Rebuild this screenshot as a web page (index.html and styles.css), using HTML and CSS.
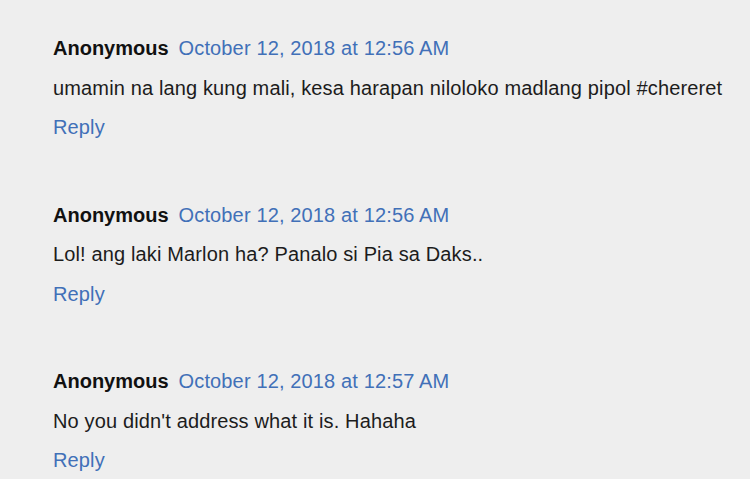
FILE: index.html
```html
<!DOCTYPE html>
<html lang="en">
<head>
    <meta charset="UTF-8">
    <title>Comments</title>
    <link rel="stylesheet" href="styles.css">
</head>
<body>
    <div class="comments">
        <!-- Comment 1 -->
        <div class="comment">
            <div class="comment-header">
                <span class="user">Anonymous</span>
                <a class="timestamp" href="#">October 12, 2018 at 12:56 AM</a>
            </div>
            <p class="comment-content">umamin na lang kung mali, kesa harapan niloloko madlang pipol #chereret</p>
            <a class="reply" href="#">Reply</a>
        </div>

        <!-- Comment 2 -->
        <div class="comment">
            <div class="comment-header">
                <span class="user">Anonymous</span>
                <a class="timestamp" href="#">October 12, 2018 at 12:56 AM</a>
            </div>
            <p class="comment-content">Lol! ang laki Marlon ha? Panalo si Pia sa Daks..</p>
            <a class="reply" href="#">Reply</a>
        </div>

        <!-- Comment 3 -->
        <div class="comment">
            <div class="comment-header">
                <span class="user">Anonymous</span>
                <a class="timestamp" href="#">October 12, 2018 at 12:57 AM</a>
            </div>
            <p class="comment-content">No you didn't address what it is. Hahaha</p>
            <a class="reply" href="#">Reply</a>
        </div>
    </div>
</body>
</html>
```
FILE: styles.css
```css
body {
    margin: 0;
    background-color: #eeeeee;
    font-family: "Liberation Sans", Arial, sans-serif;
    font-size: 20px;
    color: #1c1c1c;
}
.comments {
    padding: 29px 0 0 53px;
    display: flex;
    flex-direction: column;
    gap: 48px;
}
.comment {
    display: flex;
    flex-direction: column;
    align-items: flex-start;
    line-height: 39.5px;
    letter-spacing: 0.14px;
}
.comment-header {
    display: flex;
    gap: 10px;
}
.user {
    font-weight: bold;
    color: #111;
    letter-spacing: 0;
}
.timestamp {
    color: #4170b8;
    text-decoration: none;
}
.comment-content {
    margin: 0;
}
.reply {
    color: #4170b8;
    text-decoration: none;
}
```
